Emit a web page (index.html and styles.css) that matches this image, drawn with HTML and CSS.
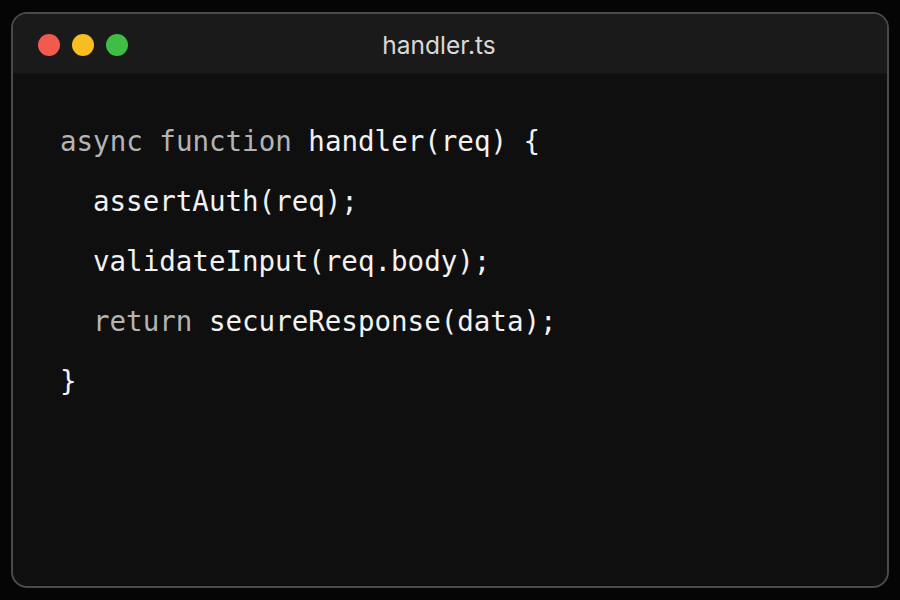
FILE: index.html
```html
<!DOCTYPE html>
<html>
<head>
<meta charset="utf-8">
<link rel="stylesheet" href="styles.css">
</head>
<body>
<div class="window">
  <div class="titlebar">
    <div class="lights">
      <span class="dot red"></span>
      <span class="dot yellow"></span>
      <span class="dot green"></span>
    </div>
    <div class="title">handler.ts</div>
  </div>
  <div class="code">
    <div class="line"><span class="kw">async function</span> handler(req) {</div>
    <div class="line indent">assertAuth(req);</div>
    <div class="line indent">validateInput(req.body);</div>
    <div class="line indent"><span class="kw">return</span> secureResponse(data);</div>
    <div class="line">}</div>
  </div>
</div>
</body>
</html>
```
FILE: styles.css
```css
html, body {
  margin: 0;
  padding: 0;
  background: #050505;
  width: 900px;
  height: 600px;
  overflow: hidden;
}
body {
  padding: 12px 0 0 11px;
  box-sizing: border-box;
}
.window {
  width: 878px;
  height: 576px;
  box-sizing: border-box;
  border: 2px solid #4a4a4a;
  border-radius: 16px;
  background: #0f0f0f;
  overflow: hidden;
  display: flex;
  flex-direction: column;
}
.titlebar {
  height: 59px;
  background: #1a1a1a;
  border-bottom: 1px solid #141414;
  position: relative;
  display: flex;
  align-items: center;
  flex-shrink: 0;
}
.lights {
  display: flex;
  gap: 12px;
  padding-left: 25px;
  padding-top: 2px;
}
.dot {
  width: 22px;
  height: 22px;
  border-radius: 50%;
  display: block;
}
.red { background: #f25a4d; }
.yellow { background: #f7bd21; }
.green { background: #3fbd45; }
.title {
  position: absolute;
  left: 0;
  right: 22px;
  top: 0;
  bottom: 0;
  display: flex;
  align-items: center;
  justify-content: center;
  font-family: "Inter", "Liberation Sans", sans-serif;
  font-size: 24.5px;
  color: #d8d8d8;
  padding-top: 2px;
}
.code {
  padding: 37px 0 0 47px;
  font-family: "DejaVu Sans Mono", monospace;
  font-size: 27.5px;
  line-height: 60px;
  color: #f2f2f2;
}
.line {
  white-space: pre;
}
.indent {
  padding-left: 33px;
}
.kw {
  color: #b4b4b4;
}
```
